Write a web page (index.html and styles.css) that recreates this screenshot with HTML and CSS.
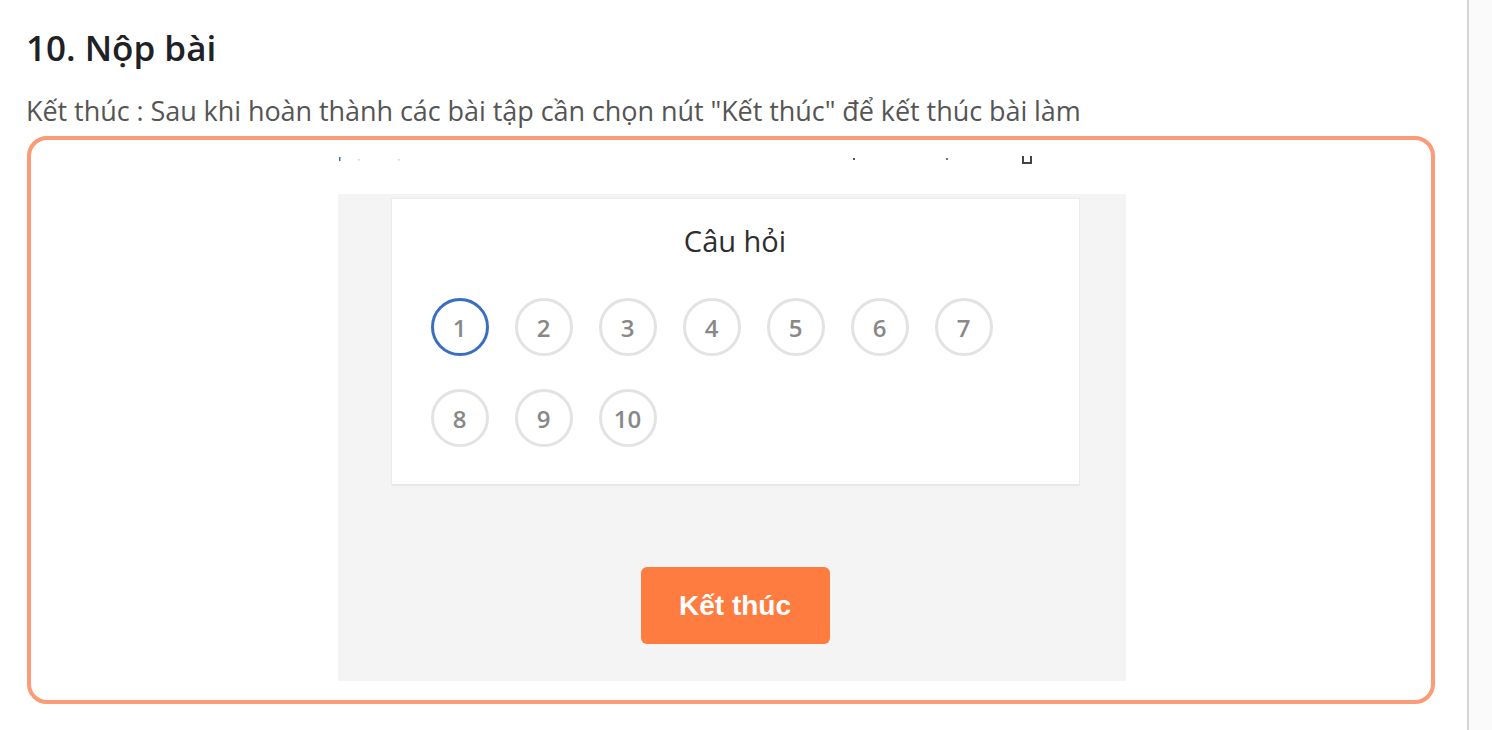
FILE: index.html
```html
<!DOCTYPE html>
<html lang="vi">
<head>
<meta charset="utf-8">
<title>Nộp bài</title>
<link rel="stylesheet" href="styles.css">
</head>
<body>
<div class="page">
  <main class="main">
    <h2 class="title">10. Nộp bài</h2>
    <p class="desc">Kết thúc : Sau khi hoàn thành các bài tập cần chọn nút "Kết thúc" để kết thúc bài làm</p>
    <div class="frame">
      <div class="shot">
        <div class="strip">
          <svg width="788" height="20" viewBox="0 0 788 20">
            <rect x="1" y="6" width="1.5" height="4" fill="#3a6fc0"/>
            <rect x="20" y="8" width="1.5" height="1.5" fill="#ccc"/>
            <rect x="60" y="8" width="1.5" height="1.5" fill="#ccc"/>
            <rect x="515" y="7" width="2" height="2" fill="#555"/>
            <rect x="608" y="7" width="2" height="2" fill="#777"/>
            <path d="M685 5 V12 H693 V5" fill="none" stroke="#444" stroke-width="2"/>
          </svg>
        </div>
        <div class="panel">
          <div class="card">
            <div class="card-title">Câu hỏi</div>
            <div class="grid">
              <span class="num active">1</span>
              <span class="num">2</span>
              <span class="num">3</span>
              <span class="num">4</span>
              <span class="num">5</span>
              <span class="num">6</span>
              <span class="num">7</span>
              <span class="num">8</span>
              <span class="num">9</span>
              <span class="num">10</span>
            </div>
          </div>
          <div class="actions">
            <button class="finish">Kết thúc</button>
          </div>
        </div>
      </div>
    </div>
  </main>
  <aside class="side"></aside>
</div>
</body>
</html>
```

FILE: styles.css
```css
* { box-sizing: border-box; }
html, body { margin: 0; padding: 0; background: #fff; }
body { font-family: "Open Sans", "Noto Sans", sans-serif; }

.page {
  display: flex;
  height: 730px;
  overflow: hidden;
}
.main {
  width: 1469px;
  border-right: 2px solid #d6d6d6;
  padding: 0 0 0 26px;
  background: #fff;
}
.side {
  flex: 1;
  background: #fafafa;
}

.title {
  margin: 26px 0 0;
  font-family: "Open Sans", sans-serif;
  font-weight: 600;
  font-size: 35px;
  line-height: 44px;
  color: #202124;
}
.desc {
  margin: 24px 0 0;
  font-family: "Open Sans", sans-serif;
  font-size: 27px;
  line-height: 34px;
  color: #555;
  letter-spacing: -0.06px;
}

.frame {
  margin: 8px 0 0 1px;
  width: 1408px;
  height: 568px;
  border: 4px solid #fb9b78;
  border-radius: 20px;
  display: flex;
  justify-content: center;
  padding-top: 11px;
}
.shot {
  width: 788px;
  margin-left: 1px;
  display: flex;
  flex-direction: column;
}
.strip {
  height: 43px;
  display: flex;
  align-items: flex-start;
}
.strip svg { display: block; }
.panel {
  height: 487px;
  background: #f4f4f4;
  padding: 4px 46px 0 53px;
  display: flex;
  flex-direction: column;
}
.card {
  height: 288px;
  background: #fff;
  border: 1px solid #ebebeb;
  border-bottom: 2px solid #e8e8e8;
  padding: 23px 0 0 39px;
}
.card-title {
  text-align: center;
  margin-left: -39px;
  font-family: "Open Sans", sans-serif;
  font-weight: 500;
  font-size: 29px;
  line-height: 38px;
  color: #2e2e2e;
}
.grid {
  margin-top: 38px;
  display: grid;
  grid-template-columns: repeat(7, 58px);
  column-gap: 26px;
  row-gap: 33px;
}
.num {
  width: 58px;
  height: 58px;
  border: 3px solid #e3e3e3;
  border-radius: 50%;
  display: flex;
  align-items: center;
  justify-content: center;
  font-family: "Open Sans", sans-serif;
  font-weight: 600;
  font-size: 24px;
  color: #888;
}
.num.active {
  border-color: #3a6ec2;
}
.actions {
  margin-top: 81px;
  display: flex;
  justify-content: center;
}
.finish {
  width: 189px;
  height: 77px;
  border: none;
  border-radius: 6px;
  background: #ff7c40;
  color: #fff;
  font-family: "Liberation Sans", Arial, sans-serif;
  font-weight: 700;
  font-size: 28px;
  padding: 0;
}
```
